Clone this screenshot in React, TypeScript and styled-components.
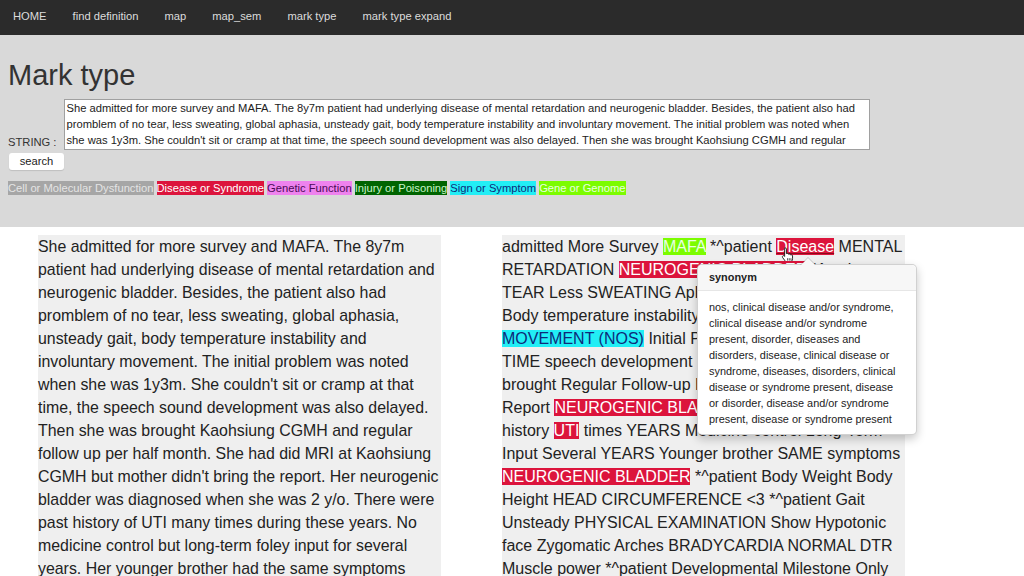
import React from "react";
import styled, { createGlobalStyle } from "styled-components";

const Global = createGlobalStyle`
  html, body { margin: 0; padding: 0; background: #ffffff; }
  body { font-family: "Liberation Sans", Arial, sans-serif; color: #222; }
  * { box-sizing: border-box; }
`;

const Nav = styled.nav`
  height: 35px;
  background: #2b2b2b;
  display: flex;
  align-items: center;
  padding: 0 0 3px 0;
`;

const NavItem = styled.a`
  color: #dcdcdc;
  font-size: 11.2px;
  padding: 0 13px;
  text-decoration: none;
  cursor: pointer;
`;

const Header = styled.section`
  background: #d9d9d9;
  height: 192px;
  padding: 0 8px;
  display: flex;
  flex-direction: column;
  align-items: flex-start;
`;

const Title = styled.h1`
  font-size: 29px;
  font-weight: normal;
  color: #333;
  margin: 24px 0 5px 0;
  line-height: 33px;
`;

const FormRow = styled.div`
  display: flex;
  align-items: flex-end;
`;

const Label = styled.label`
  font-size: 11.2px;
  color: #333;
  margin-right: 8px;
  padding-bottom: 1px;
  line-height: 14px;
`;

const TextArea = styled.textarea`
  width: 806px;
  height: 51px;
  font-family: "Liberation Sans", Arial, sans-serif;
  font-size: 11.2px;
  line-height: 16px;
  padding: 0 1px;
  border: 1px solid #a0a0a0;
  background: #fff;
  color: #222;
  resize: none;
  overflow: hidden;
  white-space: pre;
  margin-top: 2px;
`;

const SearchButton = styled.button`
  margin: 3px 0 0 1px;
  width: 55px;
  height: 17px;
  font-family: "Liberation Sans", Arial, sans-serif;
  font-size: 11.2px;
  color: #222;
  background: #fff;
  border: none;
  border-radius: 3px;
  padding: 0;
  line-height: 17px;
  box-shadow: 0 1px 1px rgba(0, 0, 0, 0.12);
`;

const Legend = styled.div`
  margin-top: 11px;
  display: flex;
  gap: 3px;
`;

const LegendTag = styled.span<{ $bg: string; $fg: string }>`
  background: ${(p) => p.$bg};
  color: ${(p) => p.$fg};
  font-size: 11.2px;
  line-height: 14px;
  height: 14px;
  padding: 0;
  white-space: nowrap;
`;

const Content = styled.main`
  display: grid;
  grid-template-columns: 403px 403px;
  column-gap: 61px;
  padding: 8px 0 0 38px;
`;

const Column = styled.div<{ $size: number }>`
  position: relative;
  background: #efefef;
  font-size: ${(p) => p.$size}px;
  line-height: 23px;
  color: #222;
`;

const Mark = styled.span<{ $bg: string; $fg: string; $underline?: boolean }>`
  position: relative;
  background: ${(p) => p.$bg};
  color: ${(p) => p.$fg};
  text-decoration: ${(p) => (p.$underline ? "underline" : "none")};
  text-decoration-color: #8b0a1c;
`;

const CursorIcon = styled.svg`
  position: absolute;
  left: 5px;
  top: 9px;
  width: 13px;
  height: 16px;
`;

const Popover = styled.div`
  position: absolute;
  left: 195px;
  top: 29px;
  width: 220px;
  background: #fff;
  border: 1px solid rgba(0, 0, 0, 0.18);
  border-radius: 5px;
  box-shadow: 0 4px 10px rgba(0, 0, 0, 0.22);
  font-size: 10.9px;
  color: #222;
  z-index: 5;
`;

const PopArrow = styled.div`
  position: absolute;
  top: -8px;
  left: 102px;
  width: 0;
  height: 0;
  border-left: 8px solid transparent;
  border-right: 8px solid transparent;
  border-bottom: 8px solid rgba(0, 0, 0, 0.18);
  &::after {
    content: "";
    position: absolute;
    left: -7px;
    top: 1px;
    border-left: 7px solid transparent;
    border-right: 7px solid transparent;
    border-bottom: 7px solid #f7f7f7;
  }
`;

const PopHeader = styled.div`
  background: #f7f7f7;
  border-bottom: 1px solid #e6e6e6;
  border-radius: 5px 5px 0 0;
  padding: 5px 11px 5px 11px;
  font-weight: bold;
  line-height: 15px;
  height: 26px;
`;

const PopBody = styled.div`
  padding: 8px 11px 7px 11px;
  line-height: 16px;
`;

const colors = {
  disease: { bg: "#dc143c", fg: "#ffffff" },
  gene: { bg: "#7cfc00", fg: "#e8ffe0" },
  sign: { bg: "#22eef5", fg: "#0d2a7a" },
};

const legend = [
  { label: "Cell or Molecular Dysfunction", bg: "#a6a6a6", fg: "#e4e4e4" },
  { label: "Disease or Syndrome", bg: "#dc143c", fg: "#ffffff" },
  { label: "Genetic Function", bg: "#ee82ee", fg: "#4b0a55" },
  { label: "Injury or Poisoning", bg: "#006400", fg: "#c8f5c8" },
  { label: "Sign or Symptom", bg: "#22eef5", fg: "#0d2a7a" },
  { label: "Gene or Genome", bg: "#7cfc00", fg: "#e8ffe0" },
];

const nav = ["HOME", "find definition", "map", "map_sem", "mark type", "mark type expand"];

const sourceText =
  "She admitted for more survey and MAFA. The 8y7m patient had underlying disease of mental retardation and neurogenic bladder. Besides, the patient also had promblem of no tear, less sweating, global aphasia, unsteady gait, body temperature instability and involuntary movement. The initial problem was noted when she was 1y3m. She couldn't sit or cramp at that time, the speech sound development was also delayed. Then she was brought Kaohsiung CGMH and regular follow up per half month. She had did MRI at Kaohsiung CGMH but mother didn't bring the report. Her neurogenic bladder was diagnosed when she was 2 y/o. There were past history of UTI many times during these years. No medicine control but long-term foley input for several years. Her younger brother had the same symptoms including neurogenic bladder.";

const inputText = [
  "She admitted for more survey and MAFA. The 8y7m patient had underlying disease of mental retardation and neurogenic bladder. Besides, the patient also had",
  "promblem of no tear, less sweating, global aphasia, unsteady gait, body temperature instability and involuntary movement. The initial problem was noted when",
  "she was 1y3m. She couldn't sit or cramp at that time, the speech sound development was also delayed. Then she was brought Kaohsiung CGMH and regular",
  "follow up per half month. She had did MRI at Kaohsiung CGMH but mother didn't bring the report. Her neurogenic bladder was diagnosed when she was 2 y/o.",
].join("\n");

export default function App() {
  return (
    <>
      <Global />
      <Nav>
        {nav.map((n) => (
          <NavItem key={n}>{n}</NavItem>
        ))}
      </Nav>
      <Header>
        <Title>Mark type</Title>
        <FormRow>
          <Label>STRING :</Label>
          <TextArea defaultValue={inputText} />
        </FormRow>
        <SearchButton>search</SearchButton>
        <Legend>
          {legend.map((l) => (
            <LegendTag key={l.label} $bg={l.bg} $fg={l.fg}>
              {l.label}
            </LegendTag>
          ))}
        </Legend>
      </Header>
      <Content>
        <Column $size={15.9}>{sourceText}</Column>
        <Column $size={16}>
          admitted More Survey <Mark $bg={colors.gene.bg} $fg={colors.gene.fg}>MAFA</Mark> *^patient{" "}
          <Mark $bg={colors.disease.bg} $fg={colors.disease.fg} $underline>
            Disease
            <CursorIcon viewBox="0 0 16 20">
              <path
                d="M5 1c.9 0 1.6.7 1.6 1.6v5.6c.3-.2.6-.3 1-.3.8 0 1.4.5 1.5 1.2.3-.3.7-.4 1.1-.4.8 0 1.4.5 1.5 1.2.3-.2.6-.3 1-.3.9 0 1.6.7 1.6 1.6v3.4c0 2.6-1.9 4.7-4.4 4.7H8.3c-1.4 0-2.6-.7-3.3-1.9L1.8 13c-.4-.7-.2-1.6.5-2 .6-.4 1.5-.2 1.9.4l.2.3V2.6C4.4 1.7 4.1 1 5 1z"
                fill="#fff"
                stroke="#111"
                strokeWidth="1.1"
                strokeLinejoin="round"
              />
              <path d="M8.1 14v3M10.2 14v3M12.3 14v3" stroke="#111" strokeWidth="0.9" />
            </CursorIcon>
          </Mark>{" "}
          MENTAL
          <br />
          RETARDATION <Mark $bg={colors.disease.bg} $fg={colors.disease.fg}>NEUROGENIC BLADDER</Mark> *^patient
          <br />
          TEAR Less SWEATING Aphasia Global Gait
          <br />
          Body temperature instability{" "}
          <Mark $bg={colors.sign.bg} $fg={colors.sign.fg}>
            INVOLUNTARY
            <br />
            MOVEMENT (NOS)
          </Mark>{" "}
          Initial Problem Noted
          <br />
          TIME speech development Delayed
          <br />
          brought Regular Follow-up Half Month MRI
          <br />
          Report <Mark $bg={colors.disease.bg} $fg={colors.disease.fg}>NEUROGENIC BLADDER</Mark> Diagnosed
          <br />
          history <Mark $bg={colors.disease.bg} $fg={colors.disease.fg}>UTI</Mark> times YEARS Medicine control Long-Term
          <br />
          Input Several YEARS Younger brother SAME symptoms
          <br />
          <Mark $bg={colors.disease.bg} $fg={colors.disease.fg}>NEUROGENIC BLADDER</Mark> *^patient Body Weight Body
          <br />
          Height HEAD CIRCUMFERENCE &lt;3 *^patient Gait
          <br />
          Unsteady PHYSICAL EXAMINATION Show Hypotonic
          <br />
          face Zygomatic Arches BRADYCARDIA NORMAL DTR
          <br />
          Muscle power *^patient Developmental Milestone Only
          <br />
          Delayed
          <Popover>
            <PopArrow />
            <PopHeader>synonym</PopHeader>
            <PopBody>
              nos, clinical disease and/or syndrome, clinical disease and/or syndrome present, disorder,
              diseases and disorders, disease, clinical disease or syndrome, diseases, disorders, clinical
              disease or syndrome present, disease or disorder, disease and/or syndrome present, disease or
              syndrome present
            </PopBody>
          </Popover>
        </Column>
      </Content>
    </>
  );
}
